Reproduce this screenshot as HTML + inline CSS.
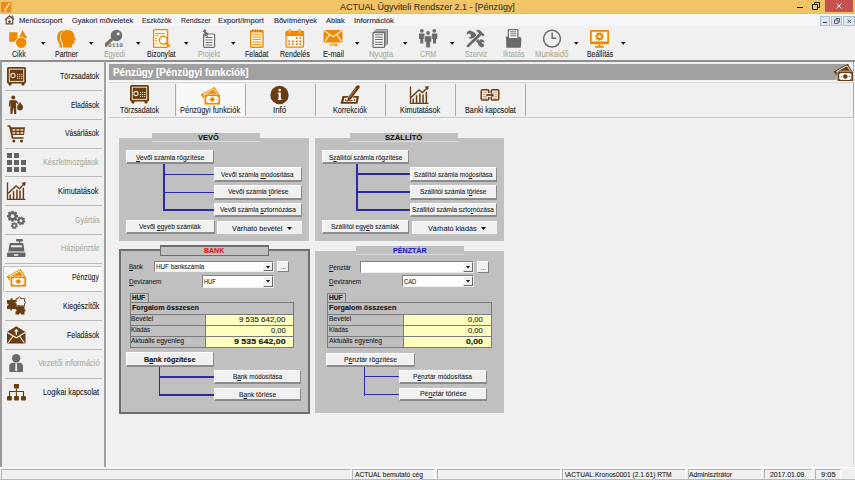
<!DOCTYPE html>
<html><head><meta charset="utf-8"><style>
*{box-sizing:border-box;margin:0;padding:0}
html,body{width:855px;height:480px;overflow:hidden;background:#f0f0f0;font-family:"Liberation Sans",sans-serif}
.a{position:absolute;white-space:nowrap}
.t{transform-origin:0 0;-webkit-text-stroke:0.1px currentColor}
svg.a{overflow:visible}
u{text-decoration:underline;text-underline-offset:1px;text-decoration-thickness:1px}
.btn{position:absolute;background:#f0f0f0;border-top:1px solid #fff;border-left:1px solid #fff;border-right:1px solid #8a8a8a;border-bottom:2px solid #8c8c8c}
</style></head><body>
<div class="a" style="left:0px;top:0px;width:855px;height:14px;background:#f1c567"></div>
<svg class="a" style="left:1px;top:1.8px;width:10.3px;height:10.2px" viewBox="0 0 11 11" preserveAspectRatio="none"><rect x="0" y="0" width="11" height="11" fill="#ee8a16"/>
<path d="M9.5 1.2 L4 8.5" stroke="#fff6e8" stroke-width="1.3"/><path d="M3.5 9.5 L6 9.5" stroke="#fbd9a8" stroke-width="0.9"/></svg>
<div class="a t" style="left:339.90px;top:3.00px;font-size:8.5px;line-height:8.5px;font-weight:400;color:#3b3325;transform:scaleX(1.0535);font-family:'Liberation Sans';">ACTUAL Ügyviteli Rendszer 2.1 - [Pénzügy]</div>
<div class="a" style="left:797px;top:6.6px;width:5.5px;height:1.1px;background:#1a1a1a"></div>
<svg class="a" style="left:812px;top:2px;width:8px;height:8px" viewBox="0 0 8 8" preserveAspectRatio="none"><path d="M0.5 2.5 H5.5 V7.5 H0.5 Z M2.5 2.5 V0.5 H7.5 V5.5 H5.5" fill="none" stroke="#1a1a1a" stroke-width="1"/></svg>
<div class="a" style="left:825px;top:0px;width:28px;height:12px;background:#c75050"></div>
<svg class="a" style="left:836px;top:3px;width:6px;height:6px" viewBox="0 0 6 6" preserveAspectRatio="none"><path d="M0.5 0.5 L5.5 5.5 M5.5 0.5 L0.5 5.5" stroke="#fff" stroke-width="1"/></svg>
<div class="a" style="left:0px;top:14px;width:855px;height:12px;background:#f4f5f7"></div>
<div class="a" style="left:0px;top:13px;width:855px;height:1px;background:#e0bd6c"></div>
<svg class="a" style="left:3.6px;top:14.2px;width:11.0px;height:11.400000000000002px" viewBox="0 0 14 14" preserveAspectRatio="none"><path d="M1.2 7 L7 2.2 L12.8 7" fill="none" stroke="#5e4632" stroke-width="1.5"/>
<path d="M9.5 2.5 L11.3 2.5 L11.3 5.5" fill="none" stroke="#5e4632" stroke-width="1.2"/>
<path d="M2.8 6.5 L2.8 12.2 L11.2 12.2 L11.2 6.5" fill="none" stroke="#5e4632" stroke-width="1.4"/>
<circle cx="7" cy="9.3" r="1.7" fill="#5e4632"/><path d="M4.2 6.2 L9.6 4.2" stroke="#5e4632" stroke-width="0.9"/></svg>
<div class="a t" style="left:18.85px;top:17.00px;font-size:7.6px;line-height:7.6px;font-weight:400;color:#262636;transform:scaleX(0.9880);font-family:'Liberation Sans';">Menücsoport</div>
<div class="a t" style="left:72.20px;top:17.00px;font-size:7.6px;line-height:7.6px;font-weight:400;color:#262636;transform:scaleX(0.9733);font-family:'Liberation Sans';">Gyakori műveletek</div>
<div class="a t" style="left:142.00px;top:17.00px;font-size:7.6px;line-height:7.6px;font-weight:400;color:#262636;transform:scaleX(0.9083);font-family:'Liberation Sans';">Eszközök</div>
<div class="a t" style="left:180.50px;top:17.00px;font-size:7.6px;line-height:7.6px;font-weight:400;color:#262636;transform:scaleX(0.9099);font-family:'Liberation Sans';">Rendszer</div>
<div class="a t" style="left:218.40px;top:17.00px;font-size:7.6px;line-height:7.6px;font-weight:400;color:#262636;transform:scaleX(1.0142);font-family:'Liberation Sans';">Export/import</div>
<div class="a t" style="left:273.70px;top:17.00px;font-size:7.6px;line-height:7.6px;font-weight:400;color:#262636;transform:scaleX(0.9797);font-family:'Liberation Sans';">Bővítmények</div>
<div class="a t" style="left:325.80px;top:17.00px;font-size:7.6px;line-height:7.6px;font-weight:400;color:#262636;transform:scaleX(0.9844);font-family:'Liberation Sans';">Ablak</div>
<div class="a t" style="left:353.60px;top:17.00px;font-size:7.6px;line-height:7.6px;font-weight:400;color:#262636;transform:scaleX(1.0164);font-family:'Liberation Sans';">Információk</div>
<div class="a" style="left:819.6px;top:16px;width:10.799999999999955px;height:10px;background:#dce6f0;border:1px solid #aebfd2"></div>
<div class="a" style="left:831px;top:16px;width:11.399999999999977px;height:10px;background:#dce6f0;border:1px solid #aebfd2"></div>
<div class="a" style="left:843.4px;top:16px;width:11.600000000000023px;height:10px;background:#dce6f0;border:1px solid #aebfd2"></div>
<div class="a" style="left:822.5px;top:22.2px;width:4px;height:0.9px;background:#444"></div>
<svg class="a" style="left:834px;top:18px;width:6px;height:6px" viewBox="0 0 6 6" preserveAspectRatio="none"><path d="M0.5 2 H4 V5.5 H0.5 Z M2 2 V0.5 H5.5 V4 H4" fill="none" stroke="#444" stroke-width="0.8"/></svg>
<svg class="a" style="left:846.5px;top:18.5px;width:4.5px;height:4.5px" viewBox="0 0 4.5 4.5" preserveAspectRatio="none"><path d="M0.5 0.5 L4 4 M4 0.5 L0.5 4" stroke="#444" stroke-width="0.8"/></svg>
<svg class="a" style="left:5px;top:26px;width:30px;height:24px" viewBox="0 0 30 24" preserveAspectRatio="none"><rect x="4.25" y="6.25" width="8.25" height="9.5" fill="#ef8a00"/>
<path d="M17.5 3.2 L23.2 12.8 L12.8 12.8 Z" fill="#ef8a00" stroke="#fff" stroke-width="0.8"/>
<circle cx="16.25" cy="16.75" r="5.7" fill="#ef8a00" stroke="#fff" stroke-width="0.9"/></svg>
<div class="a t" style="left:11.60px;top:50.00px;font-size:8.5px;line-height:8.5px;font-weight:400;color:#1e1e1e;transform:scaleX(0.8335);font-family:'Liberation Sans';">Cikk</div>
<svg class="a" style="left:52px;top:26px;width:30px;height:24px" viewBox="0 0 30 24" preserveAspectRatio="none"><path d="M9.5 4.5 C6.5 5.5 5 8.5 5.2 12 C5.4 15 6.5 16.5 7.5 18 L7.6 21.5 L10 21.5 L9.5 17 C8 15 7.5 12 8.3 9 C8.8 7 10 5.5 12 4.5 Z" fill="#ef8a00"/>
<path d="M15.5 4 C20 4 22.5 7 22.5 11 L24 13.8 L22.5 14.5 L22.5 17 C22.5 18 21.5 18.5 20 18.3 L20 21.5 L11 21.5 L11 17.5 C9.3 15.5 8.8 13.5 8.8 11.3 C8.8 6.5 11.5 4 15.5 4 Z" fill="#ef8a00"/></svg>
<div class="a t" style="left:54.70px;top:50.00px;font-size:8.5px;line-height:8.5px;font-weight:400;color:#1e1e1e;transform:scaleX(0.8202);font-family:'Liberation Sans';">Partner</div>
<svg class="a" style="left:100px;top:26px;width:30px;height:24px" viewBox="0 0 30 24" preserveAspectRatio="none"><circle cx="16.5" cy="9.5" r="5.8" fill="#6e6e6e"/><circle cx="18.2" cy="7.8" r="1.5" fill="#f0f0f0"/>
<path d="M11.2 11.8 L13.6 14.2 L7.8 18.6 L7.6 20.8 L5 20.8 L5 17.2 Z" fill="#6e6e6e"/>
<text x="8" y="21" font-family="Liberation Mono" font-size="6.2" font-weight="700" fill="#6e6e6e" textLength="15" lengthAdjust="spacingAndGlyphs">0110</text></svg>
<div class="a t" style="left:104.00px;top:50.00px;font-size:8.5px;line-height:8.5px;font-weight:400;color:#a9ae9d;transform:scaleX(0.8046);font-family:'Liberation Sans';">Egyedi</div>
<svg class="a" style="left:148px;top:26px;width:30px;height:24px" viewBox="0 0 30 24" preserveAspectRatio="none"><rect x="5.6" y="3.6" width="14" height="17.8" rx="1" fill="#fdf6e3" stroke="#ef8a00" stroke-width="1.3"/>
<path d="M7.5 7.5 L16.5 7.5 M7.5 9.6 L10.5 9.6 M7.5 12.5 L9 12.5 M7.5 14.5 L9 14.5 M7.5 17.5 L9 17.5" stroke="#ef8a00" stroke-width="0.9"/>
<circle cx="15.3" cy="14.2" r="3.9" fill="#fff" stroke="#ef8a00" stroke-width="1.4"/>
<path d="M17.9 16.9 L21.8 20.6" stroke="#ef8a00" stroke-width="2"/></svg>
<div class="a t" style="left:147.20px;top:50.00px;font-size:8.5px;line-height:8.5px;font-weight:400;color:#1e1e1e;transform:scaleX(0.8284);font-family:'Liberation Sans';">Bizonylat</div>
<svg class="a" style="left:196px;top:26px;width:30px;height:24px" viewBox="0 0 30 24" preserveAspectRatio="none"><rect x="7.6" y="8" width="11" height="13.4" rx="0.8" fill="#fafafa" stroke="#6e6e6e" stroke-width="1.2"/>
<path d="M9.5 11.5 L16.5 11.5 M9.5 14 L16.5 14 M9.5 16.5 L16.5 16.5 M9.5 19 L16.5 19" stroke="#6e6e6e" stroke-width="1"/>
<path d="M6.5 5.2 L8.8 3.2 L10.2 4.3 L10 5.6 L12.6 8 L12.2 9.2 L10.8 9.2 L12.8 11.3 L12.2 11.8 L9.8 9.8 L8.6 11 L8.2 9.8 L9 7.6 L7.6 6.2 Z" fill="#6e6e6e"/></svg>
<div class="a t" style="left:198.40px;top:50.00px;font-size:8.5px;line-height:8.5px;font-weight:400;color:#a9ae9d;transform:scaleX(0.8268);font-family:'Liberation Sans';">Projekt</div>
<svg class="a" style="left:242px;top:26px;width:30px;height:24px" viewBox="0 0 30 24" preserveAspectRatio="none"><rect x="8.7" y="5" width="12.3" height="16.3" rx="1" fill="#fdf6e3" stroke="#ef8a00" stroke-width="1.4"/>
<rect x="8.2" y="4.2" width="13.3" height="2.3" fill="#ef8a00"/>
<path d="M10.5 8.8 L19 8.8 M10.5 11.2 L19 11.2 M10.5 13.5 L19 13.5 M10.5 16.1 L19 16.1 M10.5 18.5 L19 18.5" stroke="#ef8a00" stroke-width="0.9"/>
<path d="M10.8 3.3 L10.8 5.5 M13.3 3.3 L13.3 5.5 M15.8 3.3 L15.8 5.5 M18.3 3.3 L18.3 5.5" stroke="#c86e00" stroke-width="0.9"/></svg>
<div class="a t" style="left:244.60px;top:50.00px;font-size:8.5px;line-height:8.5px;font-weight:400;color:#1e1e1e;transform:scaleX(0.8210);font-family:'Liberation Sans';">Feladat</div>
<svg class="a" style="left:281px;top:26px;width:30px;height:24px" viewBox="0 0 30 24" preserveAspectRatio="none"><rect x="5.1" y="5.5" width="17.4" height="15.7" rx="1.2" fill="#fdf6e3" stroke="#ef8a00" stroke-width="1.3"/>
<rect x="4.5" y="5" width="18.5" height="5" rx="1" fill="#ef8a00"/>
<rect x="7.8" y="3.3" width="1.6" height="4.5" rx="0.8" fill="#f7c98a" stroke="#ef8a00" stroke-width="0.6"/><rect x="17.8" y="3.3" width="1.6" height="4.5" rx="0.8" fill="#f7c98a" stroke="#ef8a00" stroke-width="0.6"/><rect x="15" y="11.3" width="1.6" height="1.6" fill="#c97a22"/><rect x="18.5" y="11.3" width="1.6" height="1.6" fill="#c97a22"/><rect x="7.3" y="14.5" width="1.6" height="1.6" fill="#c97a22"/><rect x="11" y="14.5" width="1.6" height="1.6" fill="#c97a22"/><rect x="15" y="14.5" width="1.6" height="1.6" fill="#c97a22"/><rect x="18.5" y="14.5" width="1.6" height="1.6" fill="#c97a22"/><rect x="7.3" y="17.3" width="1.6" height="1.6" fill="#c97a22"/><rect x="11" y="17.3" width="1.6" height="1.6" fill="#c97a22"/><rect x="15" y="17.3" width="1.6" height="1.6" fill="#c97a22"/><rect x="18.5" y="17.3" width="1.6" height="1.6" fill="#c97a22"/></svg>
<div class="a t" style="left:280.40px;top:50.00px;font-size:8.5px;line-height:8.5px;font-weight:400;color:#1e1e1e;transform:scaleX(0.8272);font-family:'Liberation Sans';">Rendelés</div>
<svg class="a" style="left:319px;top:26px;width:30px;height:24px" viewBox="0 0 30 24" preserveAspectRatio="none"><rect x="4.5" y="4" width="19" height="12.5" rx="0.8" fill="#ef8a00"/>
<path d="M5 4.5 L14.3 10.8 L23 4.5 M6 15.5 L10.5 8.8 M22.5 15.5 L18 8.8" fill="none" stroke="#fdf0dc" stroke-width="1.2"/>
<path d="M10 18.5 L16.5 18.5 L16.5 17 L19 19 L16.5 21 L16.5 19.5 L10 19.5 Z" fill="#ef8a00"/><rect x="13.6" y="16.5" width="1.2" height="2" fill="#ef8a00"/></svg>
<div class="a t" style="left:322.50px;top:50.00px;font-size:8.5px;line-height:8.5px;font-weight:400;color:#1e1e1e;transform:scaleX(0.8720);font-family:'Liberation Sans';">E-mail</div>
<svg class="a" style="left:365px;top:26px;width:30px;height:24px" viewBox="0 0 30 24" preserveAspectRatio="none"><path d="M10.5 3.8 L22.3 3.8 L22.3 18.5" fill="none" stroke="#6e6e6e" stroke-width="1.1"/>
<path d="M9 5.2 L20.9 5.2 L20.9 19.8" fill="none" stroke="#6e6e6e" stroke-width="1"/>
<rect x="8" y="6.5" width="11.6" height="14.8" rx="0.8" fill="#fafafa" stroke="#6e6e6e" stroke-width="1.3"/>
<path d="M10 8.8 L17.8 8.8 M10 11.2 L17.8 11.2 M10 13.5 L17.8 13.5 M10 16.2 L17.8 16.2 M10 18.5 L17.8 18.5" stroke="#6e6e6e" stroke-width="1"/></svg>
<div class="a t" style="left:368.80px;top:50.00px;font-size:8.5px;line-height:8.5px;font-weight:400;color:#a9ae9d;transform:scaleX(0.9006);font-family:'Liberation Sans';">Nyugta</div>
<svg class="a" style="left:413px;top:26px;width:30px;height:24px" viewBox="0 0 30 24" preserveAspectRatio="none"><circle cx="8.8" cy="4.8" r="1.9" fill="#6a6a6a"/><circle cx="21.3" cy="4.8" r="1.9" fill="#6a6a6a"/>
<path d="M6 7.5 L11.5 7.5 L11.5 13 L10.3 13 L10.3 17.5 L7.3 17.5 L7.3 13 L6 13 Z" fill="#6a6a6a"/>
<path d="M18.8 7.5 L24.3 7.5 L24.3 13 L23 13 L23 17.5 L20 17.5 L20 13 L18.8 13 Z" fill="#6a6a6a"/>
<circle cx="15" cy="7" r="2.2" fill="#6a6a6a" stroke="#f0f0f0" stroke-width="0.6"/>
<path d="M11.3 9.8 L18.7 9.8 L18.7 16 L17.3 16 L17.3 21.8 L12.8 21.8 L12.8 16 L11.3 16 Z" fill="#6a6a6a" stroke="#f0f0f0" stroke-width="0.7"/></svg>
<div class="a t" style="left:420.20px;top:50.00px;font-size:8.5px;line-height:8.5px;font-weight:400;color:#a9ae9d;transform:scaleX(0.8404);font-family:'Liberation Sans';">CRM</div>
<svg class="a" style="left:461px;top:26px;width:30px;height:24px" viewBox="0 0 30 24" preserveAspectRatio="none"><path d="M9.5 4.5 C7 4.3 5.3 6.5 5.8 8.8 L8 7.5 L9.8 8.8 L9.5 11 L7.3 11.8 C8.8 13 10.5 13 11.8 12.3 L18 18.2 C18.8 19 19 20.5 20 21 C21 21.6 22.5 21 23 20 C23.5 19 22.6 17.8 21.5 17.6 L21.5 17.6 L15.3 11.3 C15.8 9.6 15 7.5 13.5 6.5 Z" fill="#6a6a6a"/>
<path d="M19.5 13.3 C21.5 13 23.5 14.5 23.5 16.8 L21.3 16 L19.5 17.5 L19.8 19.3 L21.8 20.5 C19.5 21.5 17.3 20 17 18 Z" fill="#6a6a6a"/>
<path d="M15.5 3.5 L19 3.8 L23.8 8.8 L22.5 11 L20.5 9.5 L8.3 21 C7.5 21.8 6.3 21.6 5.8 21 C5.2 20.3 5.3 19.3 6 18.6 L17.8 7.3 L15 5 Z" fill="#6a6a6a" stroke="#f0f0f0" stroke-width="0.8"/></svg>
<div class="a t" style="left:465.20px;top:50.00px;font-size:8.5px;line-height:8.5px;font-weight:400;color:#a9ae9d;transform:scaleX(0.7966);font-family:'Liberation Sans';">Szerviz</div>
<svg class="a" style="left:500px;top:26px;width:30px;height:24px" viewBox="0 0 30 24" preserveAspectRatio="none"><rect x="8.3" y="3.6" width="9.6" height="10" rx="0.8" fill="#fafafa" stroke="#6a6a6a" stroke-width="1.2"/>
<path d="M10.2 5.8 L16.2 5.8 M10.2 7.8 L16.2 7.8 M10.2 9.8 L16.2 9.8" stroke="#6a6a6a" stroke-width="0.9"/>
<path d="M6 10.5 L7.5 10.5 L8.5 12 L19 12 L19.2 10.8 L20.2 10.8 L21.5 13 L20.8 21.8 L6.3 21.8 Z" fill="#6a6a6a"/></svg>
<div class="a t" style="left:502.80px;top:50.00px;font-size:8.5px;line-height:8.5px;font-weight:400;color:#a9ae9d;transform:scaleX(0.8673);font-family:'Liberation Sans';">Iktatás</div>
<svg class="a" style="left:538px;top:26px;width:30px;height:24px" viewBox="0 0 30 24" preserveAspectRatio="none"><circle cx="14" cy="12.7" r="8.4" fill="none" stroke="#6a6a6a" stroke-width="1.5"/>
<path d="M14.2 6.5 L14.2 12.3 L18.3 12.3" fill="none" stroke="#6a6a6a" stroke-width="1.5"/></svg>
<div class="a t" style="left:535.10px;top:50.00px;font-size:8.5px;line-height:8.5px;font-weight:400;color:#a9ae9d;transform:scaleX(0.9050);font-family:'Liberation Sans';">Munkaidő</div>
<svg class="a" style="left:585px;top:26px;width:30px;height:24px" viewBox="0 0 30 24" preserveAspectRatio="none"><rect x="5" y="4" width="19" height="14.2" rx="0.8" fill="#ef8a00"/>
<rect x="6.8" y="5.8" width="15.5" height="9.7" fill="#fdf6e3"/>
<path d="M17.75 9.93 L18.80 10.60 L18.50 12.08 L17.27 12.29 L17.20 12.40 L17.47 13.61 L16.21 14.45 L15.20 13.73 L15.07 13.75 L14.40 14.80 L12.92 14.50 L12.71 13.27 L12.60 13.20 L11.39 13.47 L10.55 12.21 L11.27 11.20 L11.25 11.07 L10.20 10.40 L10.50 8.92 L11.73 8.71 L11.80 8.60 L11.53 7.39 L12.79 6.55 L13.80 7.27 L13.93 7.25 L14.60 6.20 L16.08 6.50 L16.29 7.73 L16.40 7.80 L17.61 7.53 L18.45 8.79 L17.73 9.80 Z" fill="#ef8a00"/><circle cx="14.5" cy="10.5" r="1.6" fill="#fdf6e3"/>
<rect x="13.5" y="18" width="2" height="2.2" fill="#ef8a00"/><rect x="10" y="20" width="9" height="1.8" rx="0.5" fill="#ef8a00"/></svg>
<div class="a t" style="left:587.00px;top:50.00px;font-size:8.5px;line-height:8.5px;font-weight:400;color:#1e1e1e;transform:scaleX(0.8068);font-family:'Liberation Sans';">Beállítás</div>
<svg class="a" style="left:40.5px;top:42.4px;width:4.5px;height:2.8000000000000043px" viewBox="0 0 4.5 2.8" preserveAspectRatio="none"><path d="M0 0 L4.5 0 L2.25 2.8 Z" fill="#111"/></svg>
<svg class="a" style="left:88.5px;top:42.4px;width:4.5px;height:2.8000000000000043px" viewBox="0 0 4.5 2.8" preserveAspectRatio="none"><path d="M0 0 L4.5 0 L2.25 2.8 Z" fill="#111"/></svg>
<svg class="a" style="left:136px;top:42.4px;width:4.5px;height:2.8000000000000043px" viewBox="0 0 4.5 2.8" preserveAspectRatio="none"><path d="M0 0 L4.5 0 L2.25 2.8 Z" fill="#111"/></svg>
<svg class="a" style="left:183.5px;top:42.4px;width:4.5px;height:2.8000000000000043px" viewBox="0 0 4.5 2.8" preserveAspectRatio="none"><path d="M0 0 L4.5 0 L2.25 2.8 Z" fill="#111"/></svg>
<svg class="a" style="left:230.5px;top:42.4px;width:4.5px;height:2.8000000000000043px" viewBox="0 0 4.5 2.8" preserveAspectRatio="none"><path d="M0 0 L4.5 0 L2.25 2.8 Z" fill="#111"/></svg>
<svg class="a" style="left:354.7px;top:42.4px;width:4.5px;height:2.8000000000000043px" viewBox="0 0 4.5 2.8" preserveAspectRatio="none"><path d="M0 0 L4.5 0 L2.25 2.8 Z" fill="#111"/></svg>
<svg class="a" style="left:402.5px;top:42.4px;width:4.5px;height:2.8000000000000043px" viewBox="0 0 4.5 2.8" preserveAspectRatio="none"><path d="M0 0 L4.5 0 L2.25 2.8 Z" fill="#111"/></svg>
<svg class="a" style="left:450.4px;top:42.4px;width:4.5px;height:2.8000000000000043px" viewBox="0 0 4.5 2.8" preserveAspectRatio="none"><path d="M0 0 L4.5 0 L2.25 2.8 Z" fill="#111"/></svg>
<svg class="a" style="left:573.6px;top:42.4px;width:4.5px;height:2.8000000000000043px" viewBox="0 0 4.5 2.8" preserveAspectRatio="none"><path d="M0 0 L4.5 0 L2.25 2.8 Z" fill="#111"/></svg>
<svg class="a" style="left:621.2px;top:42.4px;width:4.5px;height:2.8000000000000043px" viewBox="0 0 4.5 2.8" preserveAspectRatio="none"><path d="M0 0 L4.5 0 L2.25 2.8 Z" fill="#111"/></svg>
<div class="a" style="left:0px;top:60.3px;width:855px;height:1.5px;background:#8e8e8e"></div>
<div class="a" style="left:0px;top:61px;width:1.5px;height:406px;background:#9a9a9a"></div>
<div class="a" style="left:104.3px;top:61px;width:1.5px;height:406px;background:#a0a0a0"></div>
<div class="a" style="left:3px;top:266px;width:99px;height:25.5px;background:#f7f7f7;border-top:1px solid #c4c4c4;border-left:1px solid #c4c4c4"></div>
<svg class="a" style="left:4px;top:64px;width:26px;height:24px" viewBox="0 0 26 24" preserveAspectRatio="none"><rect x="3" y="3" width="19" height="16.5" rx="1.6" fill="#6a3c12"/><rect x="4.5" y="18" width="3" height="3.5" rx="0.8" fill="#6a3c12"/><rect x="17.5" y="18" width="3" height="3.5" rx="0.8" fill="#6a3c12"/><rect x="5.3" y="5.2" width="14.4" height="12.2" fill="none" stroke="#f2dcc4" stroke-width="1"/><circle cx="9" cy="11.5" r="2.1" fill="none" stroke="#f2dcc4" stroke-width="1.1"/><rect x="13.0" y="9.9" width="1.1" height="1.1" fill="#f2dcc4"/><rect x="13.0" y="11.9" width="1.1" height="1.1" fill="#f2dcc4"/><rect x="13.0" y="13.9" width="1.1" height="1.1" fill="#f2dcc4"/><rect x="15.1" y="9.9" width="1.1" height="1.1" fill="#f2dcc4"/><rect x="15.1" y="11.9" width="1.1" height="1.1" fill="#f2dcc4"/><rect x="15.1" y="13.9" width="1.1" height="1.1" fill="#f2dcc4"/><rect x="17.2" y="9.9" width="1.1" height="1.1" fill="#f2dcc4"/><rect x="17.2" y="11.9" width="1.1" height="1.1" fill="#f2dcc4"/><rect x="17.2" y="13.9" width="1.1" height="1.1" fill="#f2dcc4"/></svg>
<div class="a t" style="left:59.75px;top:72.00px;font-size:8.5px;line-height:8.5px;font-weight:400;color:#1e1e1e;transform:scaleX(0.8365);font-family:'Liberation Sans';">Törzsadatok</div>
<div class="a" style="left:4.5px;top:90.0px;width:97.5px;height:1.2px;background:#b9b9b9"></div>
<svg class="a" style="left:4px;top:92px;width:26px;height:24px" viewBox="0 0 26 24" preserveAspectRatio="none"><circle cx="9.25" cy="5.6" r="2.0" fill="#6a3c12"/>
<path d="M6.6 8.2 L11.9 8.2 Q12.6 8.3 13 9 L14.6 11.6 L13.9 12.3 L12.2 10.3 L12.2 22 L10.3 22 L9.3 15.2 L8.3 22 L6.4 22 L6.4 10.5 L5.9 14.6 L4.9 14.4 L5.3 9.3 Q5.6 8.3 6.6 8.2 Z" fill="#6a3c12"/>
<path d="M15.0 10.4 L17.2 10.4 L16.7 11.8 C18.6 12.6 19.1 14.3 19.0 15.6 C18.9 17.6 17.6 18.6 16.0 18.6 C14.4 18.6 13.1 17.6 13.1 15.6 C13.1 14.1 13.8 12.6 15.4 11.8 Z" fill="#6a3c12"/></svg>
<div class="a t" style="left:70.60px;top:101.00px;font-size:8.5px;line-height:8.5px;font-weight:400;color:#1e1e1e;transform:scaleX(0.8091);font-family:'Liberation Sans';">Eladások</div>
<div class="a" style="left:4.5px;top:118.75px;width:97.5px;height:1.2px;background:#b9b9b9"></div>
<svg class="a" style="left:4px;top:121px;width:26px;height:24px" viewBox="0 0 26 24" preserveAspectRatio="none"><path d="M3.5 5 L5.8 5 L8.5 17 L19.5 17" fill="none" stroke="#6a3c12" stroke-width="1.6" stroke-linejoin="round"/><path d="M6.5 6.3 L21 6.3 L20 14 L8 14 Z" fill="#6a3c12"/><rect x="8.5" y="8.2" width="2.8" height="1.5" fill="#f6ead8"/><rect x="12.5" y="8.2" width="2.8" height="1.5" fill="#f6ead8"/><rect x="16.5" y="8.2" width="2.8" height="1.5" fill="#f6ead8"/><rect x="8.5" y="11.2" width="2.8" height="1.5" fill="#f6ead8"/><rect x="12.5" y="11.2" width="2.8" height="1.5" fill="#f6ead8"/><rect x="16.5" y="11.2" width="2.8" height="1.5" fill="#f6ead8"/><circle cx="9.8" cy="20" r="1.5" fill="#6a3c12"/><circle cx="17.5" cy="20" r="1.5" fill="#6a3c12"/></svg>
<div class="a t" style="left:65.00px;top:129.00px;font-size:8.5px;line-height:8.5px;font-weight:400;color:#1e1e1e;transform:scaleX(0.8061);font-family:'Liberation Sans';">Vásárlások</div>
<div class="a" style="left:4.5px;top:147.5px;width:97.5px;height:1.2px;background:#b9b9b9"></div>
<svg class="a" style="left:4px;top:150px;width:26px;height:24px" viewBox="0 0 26 24" preserveAspectRatio="none"><rect x="3" y="3" width="5" height="5" fill="#626262"/><rect x="10" y="3" width="5" height="5" fill="#626262"/><rect x="3" y="10" width="5" height="5" fill="#626262"/><rect x="10" y="10" width="5" height="5" fill="#626262"/><rect x="17" y="10" width="5" height="5" fill="#626262"/><rect x="3" y="17" width="5" height="5" fill="#626262"/><rect x="10" y="17" width="5" height="5" fill="#626262"/><rect x="17" y="17" width="5" height="5" fill="#626262"/></svg>
<div class="a t" style="left:43.20px;top:158.00px;font-size:8.5px;line-height:8.5px;font-weight:400;color:#a9ae9d;transform:scaleX(0.8358);font-family:'Liberation Sans';">Készletmozgások</div>
<div class="a" style="left:4.5px;top:176.25px;width:97.5px;height:1.2px;background:#b9b9b9"></div>
<svg class="a" style="left:4px;top:179px;width:26px;height:24px" viewBox="0 0 26 24" preserveAspectRatio="none"><path d="M3.5 3.5 L3.5 20.3 L21.5 20.3" fill="none" stroke="#6a3c12" stroke-width="1.3"/><path d="M4 14.5 L12 7 L15.5 9.5 L20 5" fill="none" stroke="#6a3c12" stroke-width="1.4"/><path d="M17.5 3.8 L21.8 3 L21 7.3 Z" fill="#6a3c12"/><rect x="5.5" y="15.5" width="1.5" height="4.5" fill="#6a3c12"/><rect x="8.8" y="12.2" width="1.5" height="7.800000000000001" fill="#6a3c12"/><rect x="12.2" y="10.5" width="1.5" height="9.5" fill="#6a3c12"/><rect x="15.3" y="11.5" width="1.5" height="8.5" fill="#6a3c12"/><rect x="18.6" y="8.8" width="1.5" height="11.2" fill="#6a3c12"/></svg>
<div class="a t" style="left:58.30px;top:187.00px;font-size:8.5px;line-height:8.5px;font-weight:400;color:#1e1e1e;transform:scaleX(0.8670);font-family:'Liberation Sans';">Kimutatások</div>
<div class="a" style="left:4.5px;top:205.0px;width:97.5px;height:1.2px;background:#b9b9b9"></div>
<svg class="a" style="left:4px;top:207px;width:26px;height:24px" viewBox="0 0 26 24" preserveAspectRatio="none"><path d="M12.50 7.63 L14.01 8.22 L14.01 10.18 L12.50 10.77 L12.44 10.92 L13.09 12.40 L11.70 13.79 L10.22 13.14 L10.07 13.20 L9.48 14.71 L7.52 14.71 L6.93 13.20 L6.78 13.14 L5.30 13.79 L3.91 12.40 L4.56 10.92 L4.50 10.77 L2.99 10.18 L2.99 8.22 L4.50 7.63 L4.56 7.48 L3.91 6.00 L5.30 4.61 L6.78 5.26 L6.93 5.20 L7.52 3.69 L9.48 3.69 L10.07 5.20 L10.22 5.26 L11.70 4.61 L13.09 6.00 L12.44 7.48 Z" fill="#666666"/><circle cx="8.5" cy="9.2" r="1.9" fill="#f0f0f0"/><path d="M20.25 13.23 L21.40 13.90 L21.09 15.42 L19.77 15.59 L19.70 15.70 L20.04 16.98 L18.75 17.84 L17.70 17.03 L17.57 17.05 L16.90 18.20 L15.38 17.89 L15.21 16.57 L15.10 16.50 L13.82 16.84 L12.96 15.55 L13.77 14.50 L13.75 14.37 L12.60 13.70 L12.91 12.18 L14.23 12.01 L14.30 11.90 L13.96 10.62 L15.25 9.76 L16.30 10.57 L16.43 10.55 L17.10 9.40 L18.62 9.71 L18.79 11.03 L18.90 11.10 L20.18 10.76 L21.04 12.05 L20.23 13.10 Z" fill="#666666"/><circle cx="17" cy="13.8" r="1.5" fill="#f0f0f0"/><path d="M12.88 18.27 L13.78 18.94 L13.37 20.28 L12.24 20.33 L12.16 20.41 L12.20 21.54 L10.90 22.05 L10.16 21.20 L10.05 21.19 L9.19 21.92 L7.98 21.22 L8.18 20.11 L8.12 20.01 L7.01 19.80 L6.80 18.41 L7.80 17.89 L7.83 17.78 L7.31 16.78 L8.27 15.75 L9.30 16.20 L9.41 16.16 L9.86 15.13 L11.26 15.23 L11.55 16.32 L11.65 16.38 L12.74 16.09 L13.53 17.25 L12.86 18.16 Z" fill="#666666"/><circle cx="10.3" cy="18.6" r="1.2" fill="#f0f0f0"/></svg>
<div class="a t" style="left:75.00px;top:216.00px;font-size:8.5px;line-height:8.5px;font-weight:400;color:#a9ae9d;transform:scaleX(0.8303);font-family:'Liberation Sans';">Gyártás</div>
<div class="a" style="left:4.5px;top:233.75px;width:97.5px;height:1.2px;background:#b9b9b9"></div>
<svg class="a" style="left:4px;top:236px;width:26px;height:24px" viewBox="0 0 26 24" preserveAspectRatio="none"><rect x="12" y="3" width="7" height="2.6" rx="1" fill="#656565"/><rect x="15" y="5" width="1.2" height="2.5" fill="#656565"/>
<path d="M5.8 7 L19.2 7 L20.5 15.5 L4.2 15.5 Z" fill="#656565"/>
<rect x="7" y="9.3" width="11" height="2" fill="#f0f0f0"/>
<rect x="3" y="16.6" width="18.5" height="4.5" rx="0.8" fill="#656565"/>
<rect x="10" y="18.3" width="4.2" height="1.5" fill="#f0f0f0"/></svg>
<div class="a t" style="left:61.00px;top:244.00px;font-size:8.5px;line-height:8.5px;font-weight:400;color:#a9ae9d;transform:scaleX(0.8457);font-family:'Liberation Sans';">Házipénztár</div>
<div class="a" style="left:4.5px;top:262.5px;width:97.5px;height:1.2px;background:#b9b9b9"></div>
<svg class="a" style="left:4px;top:265px;width:26px;height:24px" viewBox="0 0 26 24" preserveAspectRatio="none"><path d="M2.6 11.6 L16.6 4.0 L21.4 11.2 L7.6 18.6 Z" fill="#ef8a00"/>
<path d="M5.6 11.4 L16.0 5.8 L19.0 10.4" fill="none" stroke="#ffffff" stroke-width="0.9"/>
<rect x="5.8" y="10.8" width="16.8" height="11.2" fill="#ffffff"/>
<rect x="6.5" y="11.4" width="15.6" height="10.2" fill="#ef8a00"/>
<rect x="8.2" y="13.1" width="12.2" height="6.8" fill="#ffffff"/>
<path d="M8.2 13.1 L9.8 13.1 L8.2 14.6 Z M20.4 13.1 L18.8 13.1 L20.4 14.6 Z M8.2 19.9 L9.8 19.9 L8.2 18.4 Z M20.4 19.9 L18.8 19.9 L20.4 18.4 Z" fill="#ef8a00"/>
<circle cx="14.3" cy="16.5" r="2.3" fill="#ef8a00"/>
<circle cx="10.3" cy="16.5" r="0.6" fill="#ef8a00"/><circle cx="18.3" cy="16.5" r="0.6" fill="#ef8a00"/></svg>
<div class="a t" style="left:72.00px;top:273.00px;font-size:8.5px;line-height:8.5px;font-weight:400;color:#1e1e1e;transform:scaleX(0.8129);font-family:'Liberation Sans';">Pénzügy</div>
<div class="a" style="left:4.5px;top:291.25px;width:97.5px;height:1.2px;background:#b9b9b9"></div>
<svg class="a" style="left:4px;top:293px;width:26px;height:24px" viewBox="0 0 26 24" preserveAspectRatio="none"><path d="M3 7 L6.5 7 C6 5.5 7.5 4.8 8.3 5.5 C9 6 8.8 6.8 8.5 7 L12 7 L12 10 C13 9.5 14 10.5 13.3 11.5 C12.8 12 12.3 12 12 11.8 L12 16 L8 16 C8.5 17 7.5 18 6.5 17.3 C6 16.8 6.2 16.3 6.5 16 L3 16 L3 12.5 C4 13 5 12 4.3 11 C3.8 10.5 3.3 10.6 3 10.8 Z" fill="#6a3c12"/>
<path d="M12.2 5.5 L14.5 5.5 C14 4.2 15.5 3.5 16.3 4.2 C17 4.8 16.8 5.3 16.5 5.5 L20.5 5.5 L20.5 8.5 C21.5 8.2 22 9.5 21.3 10.2 C20.9 10.5 20.7 10.5 20.5 10.4 L20.5 12.8 L16.8 12.8 C17.2 13.8 16 14.3 15.3 13.7 C14.9 13.3 15 13 15.2 12.8 L12.2 12.8 L12.2 10.5 C11.2 11 10.6 9.8 11.2 9.1 C11.6 8.7 12 8.8 12.2 9 Z" fill="#f4f4f4" stroke="#6a3c12" stroke-width="0.9"/>
<path d="M11.5 13.3 L14.5 13.3 C14.2 12.5 15.3 11.8 16 12.4 C16.5 12.9 16.3 13.2 16.2 13.3 L20.5 13.3 L20.5 16.5 C21.5 16.2 22 17.5 21.2 18.2 C20.8 18.5 20.6 18.4 20.5 18.3 L20.5 21.5 L17 21.5 C17.3 20.5 16 20 15.4 20.7 C15.1 21 15.2 21.3 15.3 21.5 L11.5 21.5 L11.5 18.5 C12.5 18.8 13 17.5 12.2 16.8 C11.9 16.5 11.6 16.6 11.5 16.7 Z" fill="#6a3c12"/></svg>
<div class="a t" style="left:62.50px;top:302.00px;font-size:8.5px;line-height:8.5px;font-weight:400;color:#1e1e1e;transform:scaleX(0.8279);font-family:'Liberation Sans';">Kiegészítők</div>
<div class="a" style="left:4.5px;top:320.0px;width:97.5px;height:1.2px;background:#b9b9b9"></div>
<svg class="a" style="left:4px;top:322px;width:26px;height:24px" viewBox="0 0 26 24" preserveAspectRatio="none"><path d="M3 10 L12.3 4.3 L21.5 10 L21.5 20.5 Q21.5 21.5 20.5 21.5 L4 21.5 Q3 21.5 3 20.5 Z" fill="#6a3c12"/>
<path d="M3.3 10.5 L12.3 15.8 L21.2 10.5 M4.2 20.8 L9 14.2 M20.3 20.8 L15.6 14.2" fill="none" stroke="#fbf3ea" stroke-width="1.1"/>
<path d="M12.3 6.8 L14.8 9.5 L13 9.5 L13 12.8 L11.6 12.8 L11.6 9.5 L9.8 9.5 Z" fill="#fbf3ea"/></svg>
<div class="a t" style="left:66.60px;top:331.00px;font-size:8.5px;line-height:8.5px;font-weight:400;color:#1e1e1e;transform:scaleX(0.8232);font-family:'Liberation Sans';">Feladások</div>
<div class="a" style="left:4.5px;top:348.75px;width:97.5px;height:1.2px;background:#b9b9b9"></div>
<svg class="a" style="left:4px;top:350px;width:26px;height:24px" viewBox="0 0 26 24" preserveAspectRatio="none"><circle cx="12.2" cy="8.2" r="4.2" fill="#6a6a6a"/>
<path d="M5.3 22 L5.3 16.5 Q5.3 12.8 9 12.8 L15.4 12.8 Q19 12.8 19 16.5 L19 22 Z" fill="#6a6a6a"/>
<path d="M11.5 14.3 L12.9 14.3 L13.2 20.5 L12.2 21.5 L11.2 20.5 Z" fill="#f0f0f0"/><circle cx="12.2" cy="13.8" r="0.9" fill="#f0f0f0"/></svg>
<div class="a t" style="left:37.50px;top:359.00px;font-size:8.5px;line-height:8.5px;font-weight:400;color:#a9ae9d;transform:scaleX(0.8892);font-family:'Liberation Sans';">Vezetői információ</div>
<div class="a" style="left:4.5px;top:377.5px;width:97.5px;height:1.2px;background:#b9b9b9"></div>
<svg class="a" style="left:4px;top:379px;width:26px;height:24px" viewBox="0 0 26 24" preserveAspectRatio="none"><rect x="9.8" y="5" width="5.2" height="4.5" rx="1" fill="#6a3c12"/>
<path d="M12.4 9.5 L12.4 17 M5.5 17 L5.5 12.5 L19.5 12.5 L19.5 17" fill="none" stroke="#6a3c12" stroke-width="1.1"/>
<rect x="3" y="17" width="4.9" height="4.6" rx="1" fill="#6a3c12"/><rect x="10" y="17" width="4.9" height="4.6" rx="1" fill="#6a3c12"/><rect x="17" y="17" width="4.9" height="4.6" rx="1" fill="#6a3c12"/></svg>
<div class="a t" style="left:42.80px;top:388.00px;font-size:8.5px;line-height:8.5px;font-weight:400;color:#1e1e1e;transform:scaleX(0.8611);font-family:'Liberation Sans';">Logikai kapcsolat</div>
<div class="a" style="left:106px;top:61.7px;width:749px;height:406px;background:#f0f0f0;border-left:1px solid #fff"></div>
<div class="a" style="left:853px;top:61.5px;width:1px;height:56.5px;background:#b0b0b0"></div>
<div class="a" style="left:853px;top:118px;width:1px;height:349px;background:#d4d4d4"></div>
<div class="a" style="left:109px;top:64.3px;width:740px;height:15.3px;background:#a0a0a0"></div>
<div class="a t" style="left:112.70px;top:68.00px;font-size:10px;line-height:10px;font-weight:700;color:#ffffff;transform:scaleX(0.9803);font-family:'Liberation Sans';">Pénzügy [Pénzügyi funkciók]</div>
<svg class="a" style="left:831.2px;top:59.5px;width:30.0px;height:24.0px" viewBox="0 0 30 24" preserveAspectRatio="none"><path d="M2.6 11.6 L16.6 4.0 L21.4 11.2 L7.6 18.6 Z" fill="#6a3c12"/>
<path d="M5.6 11.4 L16.0 5.8 L19.0 10.4" fill="none" stroke="#ffffff" stroke-width="0.9"/>
<rect x="5.8" y="10.8" width="16.8" height="11.2" fill="#ffffff"/>
<rect x="6.5" y="11.4" width="15.6" height="10.2" fill="#6a3c12"/>
<rect x="8.2" y="13.1" width="12.2" height="6.8" fill="#ffffff"/>
<path d="M8.2 13.1 L9.8 13.1 L8.2 14.6 Z M20.4 13.1 L18.8 13.1 L20.4 14.6 Z M8.2 19.9 L9.8 19.9 L8.2 18.4 Z M20.4 19.9 L18.8 19.9 L20.4 18.4 Z" fill="#6a3c12"/>
<circle cx="14.3" cy="16.5" r="2.3" fill="#6a3c12"/>
<circle cx="10.3" cy="16.5" r="0.6" fill="#6a3c12"/><circle cx="18.3" cy="16.5" r="0.6" fill="#6a3c12"/></svg>
<div class="a" style="left:109px;top:81.2px;width:744px;height:1.2px;background:#ffffff"></div>
<div class="a" style="left:109px;top:82.4px;width:744px;height:0.8px;background:#d6d6d6"></div>
<div class="a" style="left:177px;top:83.5px;width:67px;height:32.5px;background:#f8f8f8;border-top:1px solid #ffffff"></div>
<div class="a" style="left:174.8px;top:84px;width:1px;height:31.5px;background:#ababab"></div>
<div class="a" style="left:244.5px;top:84px;width:1px;height:31.5px;background:#ababab"></div>
<div class="a" style="left:314.6px;top:84px;width:1px;height:31.5px;background:#ababab"></div>
<div class="a" style="left:384.6px;top:84px;width:1px;height:31.5px;background:#ababab"></div>
<div class="a" style="left:454.6px;top:84px;width:1px;height:31.5px;background:#ababab"></div>
<div class="a" style="left:524.7px;top:84px;width:1px;height:31.5px;background:#ababab"></div>
<div class="a" style="left:109px;top:117px;width:744px;height:1px;background:#c6c6c6"></div>
<div class="a" style="left:109px;top:118px;width:744px;height:1px;background:#f6f6f6"></div>
<svg class="a" style="left:126.9px;top:82px;width:30.0px;height:24px" viewBox="0 0 30 24" preserveAspectRatio="none"><rect x="3" y="3" width="19" height="16.5" rx="1.6" fill="#6a3c12"/><rect x="4.5" y="18" width="3" height="3.5" rx="0.8" fill="#6a3c12"/><rect x="17.5" y="18" width="3" height="3.5" rx="0.8" fill="#6a3c12"/><rect x="5.3" y="5.2" width="14.4" height="12.2" fill="none" stroke="#f2dcc4" stroke-width="1"/><circle cx="9" cy="11.5" r="2.1" fill="none" stroke="#f2dcc4" stroke-width="1.1"/><rect x="13.0" y="9.9" width="1.1" height="1.1" fill="#f2dcc4"/><rect x="13.0" y="11.9" width="1.1" height="1.1" fill="#f2dcc4"/><rect x="13.0" y="13.9" width="1.1" height="1.1" fill="#f2dcc4"/><rect x="15.1" y="9.9" width="1.1" height="1.1" fill="#f2dcc4"/><rect x="15.1" y="11.9" width="1.1" height="1.1" fill="#f2dcc4"/><rect x="15.1" y="13.9" width="1.1" height="1.1" fill="#f2dcc4"/><rect x="17.2" y="9.9" width="1.1" height="1.1" fill="#f2dcc4"/><rect x="17.2" y="11.9" width="1.1" height="1.1" fill="#f2dcc4"/><rect x="17.2" y="13.9" width="1.1" height="1.1" fill="#f2dcc4"/></svg>
<div class="a t" style="left:120.00px;top:106.00px;font-size:8.5px;line-height:8.5px;font-weight:400;color:#1e1e1e;transform:scaleX(0.8354);font-family:'Liberation Sans';">Törzsadatok</div>
<svg class="a" style="left:198px;top:82.7px;width:30px;height:24.0px" viewBox="0 0 30 24" preserveAspectRatio="none"><path d="M2.6 11.6 L16.6 4.0 L21.4 11.2 L7.6 18.6 Z" fill="#ef8a00"/>
<path d="M5.6 11.4 L16.0 5.8 L19.0 10.4" fill="none" stroke="#ffffff" stroke-width="0.9"/>
<rect x="5.8" y="10.8" width="16.8" height="11.2" fill="#ffffff"/>
<rect x="6.5" y="11.4" width="15.6" height="10.2" fill="#ef8a00"/>
<rect x="8.2" y="13.1" width="12.2" height="6.8" fill="#ffffff"/>
<path d="M8.2 13.1 L9.8 13.1 L8.2 14.6 Z M20.4 13.1 L18.8 13.1 L20.4 14.6 Z M8.2 19.9 L9.8 19.9 L8.2 18.4 Z M20.4 19.9 L18.8 19.9 L20.4 18.4 Z" fill="#ef8a00"/>
<circle cx="14.3" cy="16.5" r="2.3" fill="#ef8a00"/>
<circle cx="10.3" cy="16.5" r="0.6" fill="#ef8a00"/><circle cx="18.3" cy="16.5" r="0.6" fill="#ef8a00"/></svg>
<div class="a t" style="left:179.60px;top:106.00px;font-size:8.5px;line-height:8.5px;font-weight:400;color:#1e1e1e;transform:scaleX(0.8778);font-family:'Liberation Sans';">Pénzügyi funkciók</div>
<svg class="a" style="left:265px;top:83px;width:30px;height:24px" viewBox="0 0 30 24" preserveAspectRatio="none"><circle cx="14.5" cy="12" r="9.2" fill="#6a3c12"/>
<circle cx="14.7" cy="7" r="1.35" fill="#fff"/>
<path d="M12.8 9.4 L15.8 9.4 L15.8 15.8 L16.6 15.8 L16.6 17 L12.8 17 L12.8 15.8 L13.6 15.8 L13.6 10.5 L12.8 10.5 Z" fill="#fff"/></svg>
<div class="a t" style="left:272.50px;top:106.00px;font-size:8.5px;line-height:8.5px;font-weight:400;color:#1e1e1e;transform:scaleX(0.9342);font-family:'Liberation Sans';">Infó</div>
<svg class="a" style="left:335px;top:83px;width:30px;height:24px" viewBox="0 0 30 24" preserveAspectRatio="none"><path d="M7.5 13 L24 13 L22.5 20.8 L5.5 20.8 Z" fill="#6a3c12"/>
<path d="M9.3 14.8 L21.6 14.8 L20.6 19 L8.4 19 Z" fill="#f6ebdd"/>
<circle cx="10.6" cy="17" r="0.8" fill="#6a3c12"/><circle cx="19.6" cy="17" r="0.8" fill="#6a3c12"/>
<path d="M21.4 2.6 Q23 1.2 24.6 2.6 Q25.6 3.8 24.6 5.0 L15.8 16.8 L12 18.6 L12.6 14.4 Z" fill="#6a3c12" stroke="#f6ebdd" stroke-width="0.6"/>
<path d="M21.2 5.2 L14.2 14.6" stroke="#f6ebdd" stroke-width="0.45"/>
<path d="M11 18 C13 17.5 15 18.3 17.5 17.2" stroke="#6a3c12" stroke-width="1.1" fill="none"/></svg>
<div class="a t" style="left:332.60px;top:106.00px;font-size:8.5px;line-height:8.5px;font-weight:400;color:#1e1e1e;transform:scaleX(0.8411);font-family:'Liberation Sans';">Korrekciók</div>
<svg class="a" style="left:406.5px;top:83.2px;width:30.0px;height:24.0px" viewBox="0 0 30 24" preserveAspectRatio="none"><path d="M3.5 3.5 L3.5 20.3 L21.5 20.3" fill="none" stroke="#6a3c12" stroke-width="1.3"/><path d="M4 14.5 L12 7 L15.5 9.5 L20 5" fill="none" stroke="#6a3c12" stroke-width="1.4"/><path d="M17.5 3.8 L21.8 3 L21 7.3 Z" fill="#6a3c12"/><rect x="5.5" y="15.5" width="1.5" height="4.5" fill="#6a3c12"/><rect x="8.8" y="12.2" width="1.5" height="7.800000000000001" fill="#6a3c12"/><rect x="12.2" y="10.5" width="1.5" height="9.5" fill="#6a3c12"/><rect x="15.3" y="11.5" width="1.5" height="8.5" fill="#6a3c12"/><rect x="18.6" y="8.8" width="1.5" height="11.2" fill="#6a3c12"/></svg>
<div class="a t" style="left:399.60px;top:106.00px;font-size:8.5px;line-height:8.5px;font-weight:400;color:#1e1e1e;transform:scaleX(0.8607);font-family:'Liberation Sans';">Kimutatások</div>
<svg class="a" style="left:475px;top:83px;width:30px;height:24px" viewBox="0 0 30 24" preserveAspectRatio="none"><rect x="6.2" y="6.7" width="7.6" height="10.4" rx="1.3" fill="#f3e8dc" stroke="#6a3c12" stroke-width="1.5"/>
<rect x="16.2" y="6.7" width="7.6" height="10.4" rx="1.3" fill="#f3e8dc" stroke="#6a3c12" stroke-width="1.5"/>
<path d="M8 9.3 L12.2 9.3 M8 11.5 L10.5 11.5 M8 13.6 L12.2 13.6 M8 15.3 L12.2 15.3 M18 9.3 L22 9.3 M19.5 11.5 L22 11.5 M18 13.6 L22 13.6 M18 15.3 L22 15.3" stroke="#b89a7c" stroke-width="0.8"/>
<rect x="12.8" y="10" width="4.4" height="4" fill="#f3e8dc"/>
<path d="M11.2 12 L17 12" stroke="#6a3c12" stroke-width="1.7"/><path d="M16.3 9.6 L19.2 12 L16.3 14.4 Z" fill="#6a3c12"/></svg>
<div class="a t" style="left:464.60px;top:106.00px;font-size:8.5px;line-height:8.5px;font-weight:400;color:#1e1e1e;transform:scaleX(0.8542);font-family:'Liberation Sans';">Banki kapcsolat</div>
<div class="a" style="left:119.4px;top:138px;width:189.8px;height:102.5px;background:#c0c0c0"></div>
<div class="a" style="left:151.7px;top:133.1px;width:108px;height:8.8px;background:#c0c0c0;border-top:1px solid #bdbdbd;border-bottom:1px solid #d8d8d8"></div>
<div class="a t" style="left:197.50px;top:134.00px;font-size:8px;line-height:8px;font-weight:700;color:#141414;transform:scaleX(0.9315);font-family:'Liberation Sans';">VEVŐ</div>
<div class="a" style="left:163.4px;top:163.5px;width:1.8px;height:47.5px;background:#2b2ba8"></div>
<div class="a" style="left:164.3px;top:173.5px;width:49.69999999999999px;height:1.8px;background:#2b2ba8"></div>
<div class="a" style="left:164.3px;top:191.5px;width:49.69999999999999px;height:1.8px;background:#2b2ba8"></div>
<div class="a" style="left:164.3px;top:209.0px;width:49.69999999999999px;height:1.8px;background:#2b2ba8"></div>
<div class="btn" style="left:126px;top:150px;width:88px;height:13.699999999999989px;"></div>
<div class="a t" style="left:135.80px;top:154.00px;font-size:7.5px;line-height:7.5px;font-weight:400;color:#1e1e1e;transform:scaleX(0.8863);font-family:'Liberation Sans';"><u>V</u>evői számla rögzítése</div>
<div class="btn" style="left:214px;top:167px;width:87.80000000000001px;height:14.800000000000011px;"></div>
<div class="a t" style="left:220.80px;top:171.00px;font-size:7.5px;line-height:7.5px;font-weight:400;color:#1e1e1e;transform:scaleX(0.8524);font-family:'Liberation Sans';">Vevői számla <u>m</u>ódosítása</div>
<div class="btn" style="left:214px;top:185px;width:87.80000000000001px;height:14.5px;"></div>
<div class="a t" style="left:227.80px;top:188.00px;font-size:7.5px;line-height:7.5px;font-weight:400;color:#1e1e1e;transform:scaleX(0.8774);font-family:'Liberation Sans';">Vevői számla <u>t</u>örlése</div>
<div class="btn" style="left:214px;top:202.5px;width:87.80000000000001px;height:14.300000000000011px;"></div>
<div class="a t" style="left:219.50px;top:206.00px;font-size:7.5px;line-height:7.5px;font-weight:400;color:#1e1e1e;transform:scaleX(0.8739);font-family:'Liberation Sans';">Vevői számla <u>s</u>ztornózása</div>
<div class="btn" style="left:126px;top:220px;width:88.69999999999999px;height:13.800000000000011px;"></div>
<div class="a t" style="left:139.20px;top:223.00px;font-size:7.5px;line-height:7.5px;font-weight:400;color:#1e1e1e;transform:scaleX(0.8755);font-family:'Liberation Sans';">Vevői <u>e</u>gyéb számlák</div>
<div class="a" style="left:216.6px;top:220.5px;width:85.2px;height:13.2px;background:#f0f0f0;border-top:1px solid #fff;border-left:1px solid #fff"></div>
<div class="a t" style="left:232.20px;top:225.00px;font-size:7.9px;line-height:7.9px;font-weight:400;color:#1e1e1e;transform:scaleX(0.9132);font-family:'Liberation Sans';">Várható bevétel</div>
<svg class="a" style="left:286.8px;top:226.6px;width:5.0px;height:3.0px" viewBox="0 0 4 2.5" preserveAspectRatio="none"><path d="M0 0 L4 0 L2 2.5 Z" fill="#111"/></svg>
<div class="a" style="left:314.9px;top:138px;width:189px;height:102.5px;background:#c0c0c0"></div>
<div class="a" style="left:349.6px;top:133.4px;width:108px;height:8.5px;background:#c0c0c0;border-top:1px solid #bdbdbd;border-bottom:1px solid #d8d8d8"></div>
<div class="a t" style="left:385.00px;top:134.00px;font-size:8px;line-height:8px;font-weight:700;color:#141414;transform:scaleX(0.9516);font-family:'Liberation Sans';">SZÁLLÍTÓ</div>
<div class="a" style="left:356.1px;top:163.5px;width:1.8px;height:47.5px;background:#2b2ba8"></div>
<div class="a" style="left:357px;top:173.29999999999998px;width:52.5px;height:1.8px;background:#2b2ba8"></div>
<div class="a" style="left:357px;top:191.29999999999998px;width:52.5px;height:1.8px;background:#2b2ba8"></div>
<div class="a" style="left:357px;top:208.79999999999998px;width:52.5px;height:1.8px;background:#2b2ba8"></div>
<div class="btn" style="left:321.6px;top:150px;width:87.79999999999995px;height:13.599999999999994px;"></div>
<div class="a t" style="left:328.70px;top:154.00px;font-size:7.5px;line-height:7.5px;font-weight:400;color:#1e1e1e;transform:scaleX(0.8637);font-family:'Liberation Sans';">S<u>z</u>állítói számla rögzítése</div>
<div class="btn" style="left:409.5px;top:167px;width:87.80000000000001px;height:14.800000000000011px;"></div>
<div class="a t" style="left:413.75px;top:171.00px;font-size:7.5px;line-height:7.5px;font-weight:400;color:#1e1e1e;transform:scaleX(0.8450);font-family:'Liberation Sans';">Szállítói számla mó<u>d</u>osítása</div>
<div class="btn" style="left:409.5px;top:185px;width:87.80000000000001px;height:14.5px;"></div>
<div class="a t" style="left:420.00px;top:188.00px;font-size:7.5px;line-height:7.5px;font-weight:400;color:#1e1e1e;transform:scaleX(0.8657);font-family:'Liberation Sans';">Szállítói számla t<u>ö</u>rlése</div>
<div class="btn" style="left:409.5px;top:202.5px;width:87.80000000000001px;height:14.300000000000011px;"></div>
<div class="a t" style="left:412.00px;top:206.00px;font-size:7.5px;line-height:7.5px;font-weight:400;color:#1e1e1e;transform:scaleX(0.8643);font-family:'Liberation Sans';">Szállítói számla szto<u>r</u>nózása</div>
<div class="btn" style="left:322px;top:220px;width:86.80000000000001px;height:13.800000000000011px;"></div>
<div class="a t" style="left:331.25px;top:223.00px;font-size:7.5px;line-height:7.5px;font-weight:400;color:#1e1e1e;transform:scaleX(0.8681);font-family:'Liberation Sans';">Szállítói egy<u>é</u>b számlák</div>
<div class="a" style="left:412px;top:220.5px;width:85px;height:13.2px;background:#f0f0f0;border-top:1px solid #fff;border-left:1px solid #fff"></div>
<div class="a t" style="left:427.50px;top:225.00px;font-size:7.9px;line-height:7.9px;font-weight:400;color:#1e1e1e;transform:scaleX(0.9252);font-family:'Liberation Sans';">Várható kiadás</div>
<svg class="a" style="left:480.5px;top:226.6px;width:5.0px;height:3.0px" viewBox="0 0 4 2.5" preserveAspectRatio="none"><path d="M0 0 L4 0 L2 2.5 Z" fill="#111"/></svg>
<div class="a" style="left:118.5px;top:249.3px;width:191.5px;height:164.5px;background:#c0c0c0;border:2px solid #6e6e6e"></div>
<div class="a" style="left:160px;top:245.2px;width:109px;height:10.5px;background:#c0c0c0;border:1px solid #6e6e6e;border-top:2px solid #6e6e6e"></div>
<div class="a t" style="left:204.20px;top:247.00px;font-size:8px;line-height:8px;font-weight:700;color:#e2131a;transform:scaleX(0.8743);font-family:'Liberation Sans';">BANK</div>
<div class="a t" style="left:128.75px;top:263.00px;font-size:7.5px;line-height:7.5px;font-weight:400;color:#1e1e1e;transform:scaleX(0.8072);font-family:'Liberation Sans';"><u>B</u>ank</div>
<div class="a" style="left:154.4px;top:260.5px;width:119.6px;height:11.899999999999977px;background:#fff;border-top:1px solid #808080;border-left:1px solid #808080;border-bottom:1px solid #f0f0f0;border-right:1px solid #f0f0f0"></div>
<div class="a" style="left:263px;top:261.5px;width:10px;height:9.899999999999977px;background:#f0f0f0;border-top:1px solid #fff;border-left:1px solid #fff;border-right:1px solid #6a6a6a;border-bottom:1px solid #6a6a6a"></div>
<svg class="a" style="left:266px;top:265.5px;width:4px;height:2.5px" viewBox="0 0 4 2.5" preserveAspectRatio="none"><path d="M0 0 L4 0 L2 2.5 Z" fill="#111"/></svg>
<div class="a t" style="left:156.00px;top:263.00px;font-size:7.5px;line-height:7.5px;font-weight:400;color:#1e1e1e;transform:scaleX(0.8398);font-family:'Liberation Sans';">HUF bankszámla</div>
<div class="a" style="left:277px;top:260.5px;width:12.300000000000011px;height:11.899999999999977px;background:#f0f0f0;border-top:1px solid #fff;border-left:1px solid #fff;border-right:1px solid #808080;border-bottom:1px solid #808080"></div>
<div class="a t" style="left:280.50px;top:263.00px;font-size:7px;line-height:7px;font-weight:400;color:#333;transform:scaleX(0.8150);font-family:'Liberation Sans';">...</div>
<div class="a t" style="left:128.75px;top:278.00px;font-size:7.5px;line-height:7.5px;font-weight:400;color:#1e1e1e;transform:scaleX(0.8654);font-family:'Liberation Sans';"><u>D</u>evizanem</div>
<div class="a" style="left:202px;top:275.2px;width:72.39999999999998px;height:12.600000000000023px;background:#fff;border-top:1px solid #808080;border-left:1px solid #808080;border-bottom:1px solid #f0f0f0;border-right:1px solid #f0f0f0"></div>
<div class="a" style="left:263.4px;top:276.2px;width:10px;height:10.600000000000023px;background:#f0f0f0;border-top:1px solid #fff;border-left:1px solid #fff;border-right:1px solid #6a6a6a;border-bottom:1px solid #6a6a6a"></div>
<svg class="a" style="left:266.4px;top:280.2px;width:4.0px;height:2.5px" viewBox="0 0 4 2.5" preserveAspectRatio="none"><path d="M0 0 L4 0 L2 2.5 Z" fill="#111"/></svg>
<div class="a t" style="left:204.00px;top:278.00px;font-size:7.5px;line-height:7.5px;font-weight:400;color:#1e1e1e;transform:scaleX(0.7579);font-family:'Liberation Sans';">HUF</div>
<div class="a" style="left:129.5px;top:293px;width:19px;height:9.5px;background:#c0c0c0;border:1px solid #808080;border-bottom:none"></div>
<div class="a" style="left:129.5px;top:302.2px;width:164.0px;height:45.5px;background:#c0c0c0;border:1px solid #7a7a7a"></div>
<div class="a" style="left:205.5px;top:314.2px;width:87.0px;height:33px;background:#ffffc0"></div>
<div class="a" style="left:129.5px;top:313.7px;width:164.0px;height:1px;background:#7a7a7a"></div>
<div class="a" style="left:129.5px;top:324.5px;width:164.0px;height:1px;background:#7a7a7a"></div>
<div class="a" style="left:129.5px;top:335.8px;width:164.0px;height:1px;background:#7a7a7a"></div>
<div class="a" style="left:205.0px;top:314.2px;width:1px;height:33px;background:#7a7a7a"></div>
<div class="a t" style="left:131.70px;top:294.00px;font-size:7.5px;line-height:7.5px;font-weight:700;color:#111;transform:scaleX(0.8400);font-family:'Liberation Sans';">HUF</div>
<div class="a t" style="left:131.70px;top:304.00px;font-size:7.8px;line-height:7.8px;font-weight:700;color:#111;transform:scaleX(0.9174);font-family:'Liberation Sans';">Forgalom összesen</div>
<div class="a t" style="left:131.00px;top:315.00px;font-size:7.5px;line-height:7.5px;font-weight:400;color:#1e1e1e;transform:scaleX(0.8876);font-family:'Liberation Sans';">Bevétel</div>
<div class="a t" style="left:131.00px;top:326.00px;font-size:7.5px;line-height:7.5px;font-weight:400;color:#1e1e1e;transform:scaleX(0.8325);font-family:'Liberation Sans';">Kiadás</div>
<div class="a t" style="left:131.00px;top:337.00px;font-size:7.5px;line-height:7.5px;font-weight:400;color:#1e1e1e;transform:scaleX(0.9008);font-family:'Liberation Sans';">Aktuális egyenleg</div>
<div class="a t" style="left:239.00px;top:316.00px;font-size:7.8px;line-height:7.8px;font-weight:400;color:#1e1e1e;transform:scaleX(1.0176);font-family:'Liberation Sans';">9 535 642,00</div>
<div class="a t" style="left:270.70px;top:327.00px;font-size:7.8px;line-height:7.8px;font-weight:400;color:#1e1e1e;transform:scaleX(0.9660);font-family:'Liberation Sans';">0,00</div>
<div class="a t" style="left:233.80px;top:338.00px;font-size:8px;line-height:8px;font-weight:700;color:#111;transform:scaleX(1.1045);font-family:'Liberation Sans';">9 535 642,00</div>
<div class="a" style="left:158.5px;top:366px;width:1.8px;height:29.5px;background:#2b2ba8"></div>
<div class="a" style="left:159.4px;top:376.1px;width:54.79999999999998px;height:1.8px;background:#2b2ba8"></div>
<div class="a" style="left:159.4px;top:394.1px;width:54.79999999999998px;height:1.8px;background:#2b2ba8"></div>
<div class="btn" style="left:126px;top:352px;width:88.19999999999999px;height:15px;"></div>
<div class="a t" style="left:144.00px;top:356.00px;font-size:7.8px;line-height:7.8px;font-weight:700;color:#111;transform:scaleX(0.9265);font-family:'Liberation Sans';">B<u>a</u>nk rögzítése</div>
<div class="btn" style="left:214.2px;top:370px;width:87.19999999999999px;height:13.600000000000023px;"></div>
<div class="a t" style="left:232.70px;top:373.00px;font-size:7.5px;line-height:7.5px;font-weight:400;color:#1e1e1e;transform:scaleX(0.8507);font-family:'Liberation Sans';">B<u>a</u>nk módosítása</div>
<div class="btn" style="left:214.2px;top:388px;width:87.19999999999999px;height:13.399999999999977px;"></div>
<div class="a t" style="left:239.40px;top:391.00px;font-size:7.5px;line-height:7.5px;font-weight:400;color:#1e1e1e;transform:scaleX(0.8912);font-family:'Liberation Sans';">B<u>a</u>nk törlése</div>
<div class="a" style="left:315.1px;top:250.9px;width:189px;height:162.3px;background:#c0c0c0"></div>
<div class="a" style="left:355.7px;top:245.7px;width:108px;height:9px;background:#c0c0c0;border-top:1px solid #bdbdbd;border-bottom:1px solid #d8d8d8"></div>
<div class="a t" style="left:393.00px;top:247.00px;font-size:8px;line-height:8px;font-weight:700;color:#1a1ad8;transform:scaleX(0.8895);font-family:'Liberation Sans';">PÉNZTÁR</div>
<div class="a t" style="left:329.00px;top:264.00px;font-size:7.5px;line-height:7.5px;font-weight:400;color:#1e1e1e;transform:scaleX(0.8501);font-family:'Liberation Sans';"><u>P</u>énztár</div>
<div class="a" style="left:359.5px;top:260.5px;width:114.5px;height:12.0px;background:#fff;border-top:1px solid #808080;border-left:1px solid #808080;border-bottom:1px solid #f0f0f0;border-right:1px solid #f0f0f0"></div>
<div class="a" style="left:463px;top:261.5px;width:10px;height:10.0px;background:#f0f0f0;border-top:1px solid #fff;border-left:1px solid #fff;border-right:1px solid #6a6a6a;border-bottom:1px solid #6a6a6a"></div>
<svg class="a" style="left:466px;top:265.5px;width:4px;height:2.5px" viewBox="0 0 4 2.5" preserveAspectRatio="none"><path d="M0 0 L4 0 L2 2.5 Z" fill="#111"/></svg>
<div class="a" style="left:477px;top:260.5px;width:12.399999999999977px;height:12.0px;background:#f0f0f0;border-top:1px solid #fff;border-left:1px solid #fff;border-right:1px solid #808080;border-bottom:1px solid #808080"></div>
<div class="a t" style="left:480.50px;top:264.00px;font-size:7px;line-height:7px;font-weight:400;color:#333;transform:scaleX(0.8320);font-family:'Liberation Sans';">...</div>
<div class="a t" style="left:329.00px;top:278.00px;font-size:7.5px;line-height:7.5px;font-weight:400;color:#1e1e1e;transform:scaleX(0.8533);font-family:'Liberation Sans';"><u>D</u>evizanem</div>
<div class="a" style="left:402px;top:275.3px;width:72px;height:11.899999999999977px;background:#fff;border-top:1px solid #808080;border-left:1px solid #808080;border-bottom:1px solid #f0f0f0;border-right:1px solid #f0f0f0"></div>
<div class="a" style="left:463px;top:276.3px;width:10px;height:9.899999999999977px;background:#f0f0f0;border-top:1px solid #fff;border-left:1px solid #fff;border-right:1px solid #6a6a6a;border-bottom:1px solid #6a6a6a"></div>
<svg class="a" style="left:466px;top:280.3px;width:4px;height:2.5px" viewBox="0 0 4 2.5" preserveAspectRatio="none"><path d="M0 0 L4 0 L2 2.5 Z" fill="#111"/></svg>
<div class="a t" style="left:403.90px;top:278.00px;font-size:7.5px;line-height:7.5px;font-weight:400;color:#1e1e1e;transform:scaleX(0.7796);font-family:'Liberation Sans';">CAD</div>
<div class="a" style="left:327px;top:293px;width:19px;height:9.5px;background:#c0c0c0;border:1px solid #808080;border-bottom:none"></div>
<div class="a" style="left:327px;top:302.2px;width:164.60000000000002px;height:45.5px;background:#c0c0c0;border:1px solid #7a7a7a"></div>
<div class="a" style="left:403.6px;top:314.2px;width:87.0px;height:33px;background:#ffffc0"></div>
<div class="a" style="left:327px;top:313.7px;width:164.60000000000002px;height:1px;background:#7a7a7a"></div>
<div class="a" style="left:327px;top:324.5px;width:164.60000000000002px;height:1px;background:#7a7a7a"></div>
<div class="a" style="left:327px;top:335.8px;width:164.60000000000002px;height:1px;background:#7a7a7a"></div>
<div class="a" style="left:403.1px;top:314.2px;width:1px;height:33px;background:#7a7a7a"></div>
<div class="a t" style="left:329.00px;top:294.00px;font-size:7.5px;line-height:7.5px;font-weight:700;color:#111;transform:scaleX(0.8843);font-family:'Liberation Sans';">HUF</div>
<div class="a t" style="left:329.00px;top:304.00px;font-size:7.8px;line-height:7.8px;font-weight:700;color:#111;transform:scaleX(0.9243);font-family:'Liberation Sans';">Forgalom összesen</div>
<div class="a t" style="left:329.00px;top:315.00px;font-size:7.5px;line-height:7.5px;font-weight:400;color:#1e1e1e;transform:scaleX(0.8876);font-family:'Liberation Sans';">Bevétel</div>
<div class="a t" style="left:329.00px;top:326.00px;font-size:7.5px;line-height:7.5px;font-weight:400;color:#1e1e1e;transform:scaleX(0.8325);font-family:'Liberation Sans';">Kiadás</div>
<div class="a t" style="left:329.00px;top:337.00px;font-size:7.5px;line-height:7.5px;font-weight:400;color:#1e1e1e;transform:scaleX(0.9008);font-family:'Liberation Sans';">Aktuális egyenleg</div>
<div class="a t" style="left:468.20px;top:316.00px;font-size:7.8px;line-height:7.8px;font-weight:400;color:#1e1e1e;transform:scaleX(0.9786);font-family:'Liberation Sans';">0,00</div>
<div class="a t" style="left:468.20px;top:327.00px;font-size:7.8px;line-height:7.8px;font-weight:400;color:#1e1e1e;transform:scaleX(0.9786);font-family:'Liberation Sans';">0,00</div>
<div class="a t" style="left:466.30px;top:338.00px;font-size:8px;line-height:8px;font-weight:700;color:#111;transform:scaleX(1.0793);font-family:'Liberation Sans';">0,00</div>
<div class="a" style="left:363.6px;top:366.5px;width:1.8px;height:29.0px;background:#2b2ba8"></div>
<div class="a" style="left:364.5px;top:375.70000000000005px;width:34.30000000000001px;height:1.8px;background:#2b2ba8"></div>
<div class="a" style="left:364.5px;top:393.70000000000005px;width:34.30000000000001px;height:1.8px;background:#2b2ba8"></div>
<div class="btn" style="left:326.2px;top:352.5px;width:88.60000000000002px;height:14.0px;"></div>
<div class="a t" style="left:343.70px;top:356.00px;font-size:7.5px;line-height:7.5px;font-weight:400;color:#1e1e1e;transform:scaleX(0.9009);font-family:'Liberation Sans';">P<u>é</u>nztár rögzítése</div>
<div class="btn" style="left:398.8px;top:370px;width:88.19999999999999px;height:14px;"></div>
<div class="a t" style="left:412.80px;top:373.00px;font-size:7.5px;line-height:7.5px;font-weight:400;color:#1e1e1e;transform:scaleX(0.8826);font-family:'Liberation Sans';">P<u>é</u>nztár módosítása</div>
<div class="btn" style="left:398.8px;top:387.6px;width:88.19999999999999px;height:13.399999999999977px;"></div>
<div class="a t" style="left:419.60px;top:390.00px;font-size:7.5px;line-height:7.5px;font-weight:400;color:#1e1e1e;transform:scaleX(0.9230);font-family:'Liberation Sans';">Pé<u>n</u>ztár törlése</div>
<div class="a" style="left:0px;top:466.8px;width:855px;height:1.2px;background:#ffffff"></div>
<div class="a" style="left:0px;top:468px;width:855px;height:11px;background:#f0f0f0"></div>
<div class="a" style="left:1px;top:468.5px;width:349.5px;height:11px;border-top:1px solid #b5b5b5;border-left:1px solid #b5b5b5;border-right:1px solid #fff"></div>
<div class="a" style="left:352px;top:468.5px;width:83px;height:11px;border-top:1px solid #b5b5b5;border-left:1px solid #b5b5b5;border-right:1px solid #fff"></div>
<div class="a" style="left:437px;top:468.5px;width:124px;height:11px;border-top:1px solid #b5b5b5;border-left:1px solid #b5b5b5;border-right:1px solid #fff"></div>
<div class="a" style="left:562px;top:468.5px;width:123.70000000000005px;height:11px;border-top:1px solid #b5b5b5;border-left:1px solid #b5b5b5;border-right:1px solid #fff"></div>
<div class="a" style="left:688px;top:468.5px;width:73.60000000000002px;height:11px;border-top:1px solid #b5b5b5;border-left:1px solid #b5b5b5;border-right:1px solid #fff"></div>
<div class="a" style="left:763.5px;top:468.5px;width:48.89999999999998px;height:11px;border-top:1px solid #b5b5b5;border-left:1px solid #b5b5b5;border-right:1px solid #fff"></div>
<div class="a" style="left:814.6px;top:468.5px;width:26.799999999999955px;height:11px;border-top:1px solid #b5b5b5;border-left:1px solid #b5b5b5;border-right:1px solid #fff"></div>
<div class="a t" style="left:354.60px;top:471.00px;font-size:7.3px;line-height:7.3px;font-weight:400;color:#1e1e1e;transform:scaleX(0.9070);font-family:'Liberation Sans';">ACTUAL bemutató cég</div>
<div class="a t" style="left:564.60px;top:471.00px;font-size:7.3px;line-height:7.3px;font-weight:400;color:#1e1e1e;transform:scaleX(0.9103);font-family:'Liberation Sans';">\ACTUAL.Kronos0001 (2.1.61) RTM</div>
<div class="a t" style="left:689.00px;top:471.00px;font-size:7.3px;line-height:7.3px;font-weight:400;color:#1e1e1e;transform:scaleX(0.9237);font-family:'Liberation Sans';">Adminisztrátor</div>
<div class="a t" style="left:769.80px;top:471.00px;font-size:7.3px;line-height:7.3px;font-weight:400;color:#1e1e1e;transform:scaleX(0.9398);font-family:'Liberation Sans';">2017.01.09.</div>
<div class="a t" style="left:821.00px;top:471.00px;font-size:7.3px;line-height:7.3px;font-weight:400;color:#1e1e1e;transform:scaleX(1.0323);font-family:'Liberation Sans';">9:05</div>
<div class="a" style="left:0px;top:479px;width:855px;height:1px;background:#cdb688"></div>
</body></html>
